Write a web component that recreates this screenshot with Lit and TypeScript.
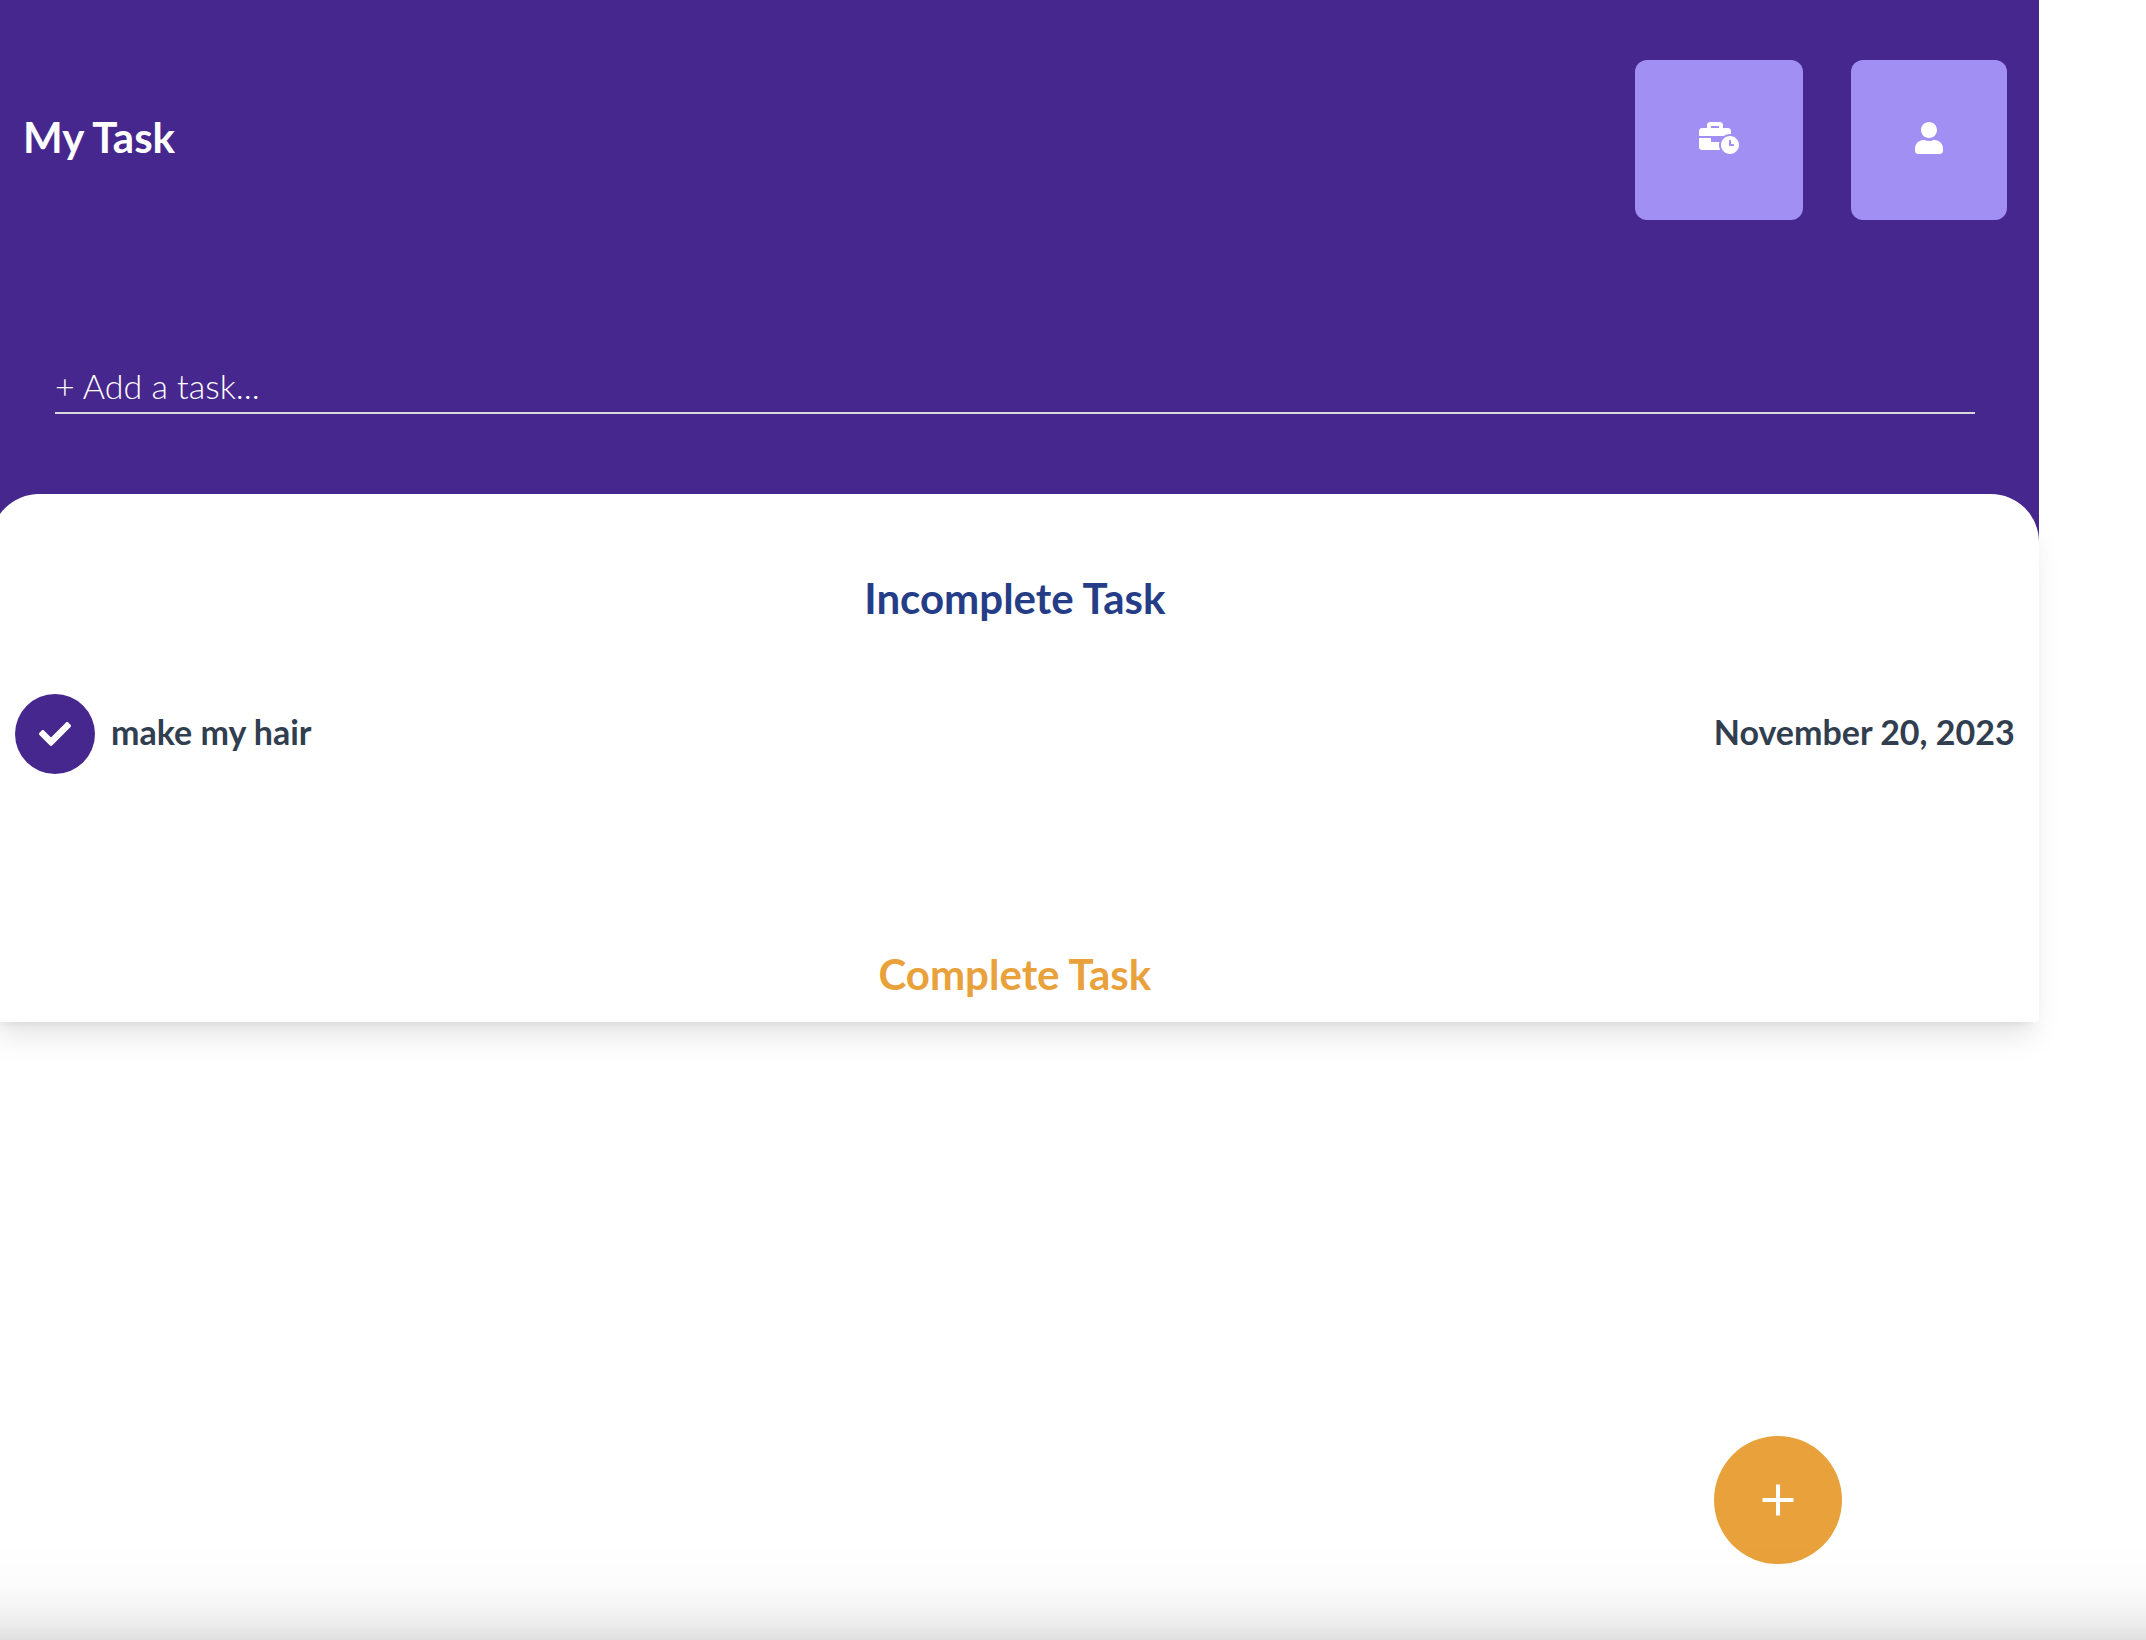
import { LitElement, css, html, svg } from "lit";
import { customElement, state } from "lit/decorators.js";

interface Task {
  id: number;
  title: string;
  date: string;
  done: boolean;
}

const icon = (width: number, path: string) => svg`
  <svg class="icon" viewBox="0 0 ${width} 512" aria-hidden="true"><path fill="currentColor" d=${path}></path></svg>`;

const BUSINESS_TIME =
  "M496 224c-79.59 0-144 64.41-144 144s64.41 144 144 144 144-64.41 144-144-64.41-144-144-144zm64 150.29c0 5.34-4.37 9.71-9.71 9.71h-60.57c-5.34 0-9.71-4.37-9.71-9.71v-76.57c0-5.34 4.37-9.71 9.71-9.71h12.57c5.34 0 9.71 4.37 9.71 9.71V352h38.29c5.34 0 9.71 4.37 9.71 9.71v12.58zM496 192c5.4 0 10.72.33 16 .81V144c0-25.6-22.4-48-48-48h-80V48c0-25.6-22.4-48-48-48H176c-25.6 0-48 22.4-48 48v48H48c-25.6 0-48 22.4-48 48v80h395.12c28.6-20.09 63.35-32 100.88-32zM320 96H192V64h128v32zm6.82 224H208c-8.84 0-16-7.16-16-16v-48H0v144c0 25.6 22.4 48 48 48h291.43C327.1 423.96 320 396.82 320 368c0-16.66 2.48-32.72 6.82-48z";
const USER =
  "M224 256c70.7 0 128-57.3 128-128S294.7 0 224 0 96 57.3 96 128s57.3 128 128 128zm89.6 32h-16.7c-22.2 10.2-46.9 16-72.9 16s-50.6-5.8-72.9-16h-16.7C60.2 288 0 348.2 0 422.4V464c0 26.5 21.5 48 48 48h352c26.5 0 48-21.5 48-48v-41.6c0-74.2-60.2-134.4-134.4-134.4z";
const CHECK =
  "M173.898 439.404l-166.4-166.4c-9.997-9.997-9.997-26.206 0-36.204l36.203-36.204c9.997-9.998 26.207-9.998 36.204 0L192 312.69 432.095 72.596c9.997-9.997 26.207-9.997 36.204 0l36.203 36.204c9.997 9.997 9.997 26.206 0 36.204l-294.4 294.401c-9.998 9.997-26.207 9.997-36.204-.001z";
const PLUS = "M224 8h64v216h216v64H288v216h-64V288H8v-64h216z";

@customElement("app-root")
export class AppRoot extends LitElement {
  static styles = css`
    :host {
      display: block;
      min-height: 100vh;
      overflow: hidden;
      background: #ffffff;
      color: #303e4f;
      font-family: Lato, "Open Sans", sans-serif;
      font-size: 34px;
      line-height: 48px;
    }
    * {
      box-sizing: border-box;
    }
    button {
      border: 0;
      margin: 0;
      color: #ffffff;
      font: inherit;
      cursor: pointer;
    }
    .app {
      width: calc(95% + 9px);
      margin-left: -9px;
    }
    .header {
      padding: 60px 32px 144px;
      background: #46278e;
      color: #ffffff;
    }
    .bar {
      display: flex;
      align-items: center;
      justify-content: space-between;
    }
    .title,
    .heading {
      margin: 0;
      font-size: 42px;
      font-weight: 700;
      line-height: 56px;
    }
    .title {
      padding-bottom: 6px;
    }
    .actions {
      display: flex;
      gap: 48px;
    }
    .action {
      padding: 62px 64px 66px;
      border-radius: 12px;
      background: #a18ff3;
    }
    .icon {
      display: block;
      height: 32px;
    }
    .form {
      margin: 136px 32px 0;
    }
    .input {
      display: block;
      width: 100%;
      height: 58px;
      padding: 2px 0 0;
      border: 0;
      border-bottom: 2px solid #d9d7de;
      border-radius: 0;
      outline: 0;
      background: transparent;
      color: #ffffff;
      font: inherit;
      font-weight: 300;
    }
    .input::placeholder {
      color: #ffffff;
      opacity: 1;
    }
    .panel {
      position: relative;
      margin-top: -64px;
      padding: 76px 24px 20px;
      border-radius: 48px 48px 0 0;
      background: #ffffff;
      box-shadow: 0 20px 30px -6px rgb(0 0 0 / 0.1), 0 8px 12px -8px rgb(0 0 0 / 0.1);
    }
    .heading {
      text-align: center;
    }
    .pending {
      color: #253d87;
    }
    .finished {
      color: #e9a13b;
    }
    .list {
      margin: 0;
      padding: 68px 0 172px;
      list-style: none;
    }
    .task {
      display: flex;
      align-items: center;
      gap: 16px;
      font-weight: 700;
    }
    .check {
      display: grid;
      place-items: center;
      width: 80px;
      height: 80px;
      padding: 0;
      border-radius: 50%;
      background: #46278e;
    }
    .name,
    .date {
      padding-bottom: 4px;
    }
    .date {
      margin-left: auto;
    }
    .fab {
      position: fixed;
      right: 304px;
      bottom: 76px;
      display: grid;
      place-items: center;
      width: 128px;
      height: 128px;
      padding: 0;
      border-radius: 50%;
      background: #e9a13b;
    }
    .shade {
      position: fixed;
      inset: auto 0 0;
      height: 96px;
      background: linear-gradient(
        rgb(0 0 0 / 0),
        rgb(0 0 0 / 0.01) 40%,
        rgb(0 0 0 / 0.04) 65%,
        rgb(0 0 0 / 0.08) 85%,
        rgb(0 0 0 / 0.12)
      );
      pointer-events: none;
    }
  `;

  @state() private tasks: Task[] = [
    { id: 1, title: "make my hair", date: "November 20, 2023", done: false },
  ];

  private add(event?: Event) {
    event?.preventDefault();
    const input = this.renderRoot.querySelector<HTMLInputElement>(".input")!;
    const title = input.value.trim();
    if (!title) {
      input.focus();
      return;
    }
    const date = new Date().toLocaleDateString("en-US", { month: "long", day: "numeric", year: "numeric" });
    this.tasks = [...this.tasks, { id: Date.now(), title, date, done: false }];
    input.value = "";
  }

  private toggle(id: number) {
    this.tasks = this.tasks.map((task) => (task.id === id ? { ...task, done: !task.done } : task));
  }

  private renderList(done: boolean) {
    const tasks = this.tasks.filter((task) => task.done === done);
    if (!tasks.length) return null;
    return html`<ul class="list">
      ${tasks.map(
        (task) => html`<li class="task">
          <button class="check" aria-label="Toggle ${task.title}" @click=${() => this.toggle(task.id)}>
            ${icon(512, CHECK)}
          </button>
          <span class="name">${task.title}</span>
          <time class="date">${task.date}</time>
        </li>`
      )}
    </ul>`;
  }

  render() {
    return html`
      <div class="app">
        <header class="header">
          <div class="bar">
            <h1 class="title">My Task</h1>
            <div class="actions">
              <button class="action" aria-label="Schedule">${icon(640, BUSINESS_TIME)}</button>
              <button class="action" aria-label="Profile">${icon(448, USER)}</button>
            </div>
          </div>
          <form class="form" @submit=${this.add}>
            <input class="input" type="text" aria-label="Add a task" placeholder="+ Add a task..." />
          </form>
        </header>
        <main class="panel">
          <h2 class="heading pending">Incomplete Task</h2>
          ${this.renderList(false)}
          <h2 class="heading finished">Complete Task</h2>
          ${this.renderList(true)}
        </main>
      </div>
      <button class="fab" aria-label="Add task" @click=${() => this.add()}>${icon(512, PLUS)}</button>
      <div class="shade"></div>
    `;
  }
}
